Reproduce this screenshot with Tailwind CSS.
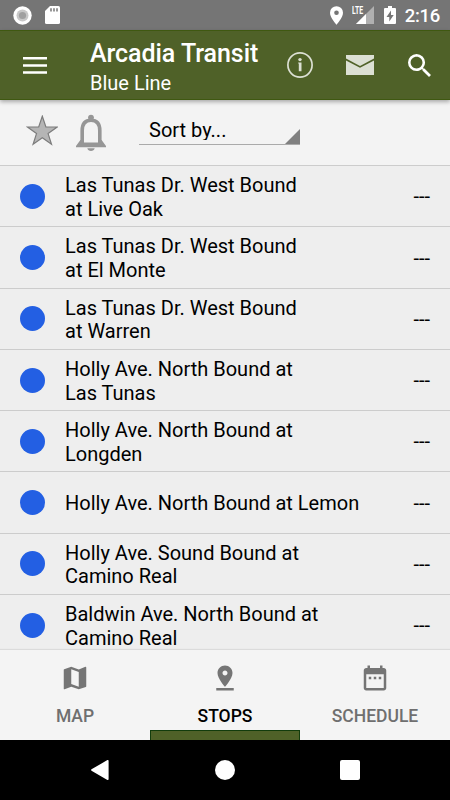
<!DOCTYPE html>
<html lang="en">
<head>
<meta charset="utf-8">
<title>Arcadia Transit</title>
<script src="https://cdn.jsdelivr.net/npm/@tailwindcss/browser@4"></script>
</head>
<body class="w-[450px] h-[800px] overflow-hidden flex flex-col bg-[#eeeeee] font-[Roboto,sans-serif] text-black">

<!-- Status bar -->
<div class="h-[30px] shrink-0 bg-[#757575] flex items-center justify-between pl-[13px] pr-[10px] text-white">
  <div class="flex items-center gap-[13px]">
    <svg class="w-[19px] h-[19px]" viewBox="0 0 19 19"><circle cx="9.5" cy="9.5" r="9.2" fill="#fff"/><circle cx="9.5" cy="9.5" r="6" fill="#c8c8c8"/><circle cx="9.5" cy="9.5" r="3.6" fill="#a0a0a0"/></svg>
    <svg class="w-[15px] h-[18px]" viewBox="0 0 15 18"><path d="M5 0h8.4Q15 0 15 1.6v14.8Q15 18 13.400 18H1.600Q0 18 0 16.400V5z" fill="#fff"/><path d="M6 2.200v3.300M9 2.200v3.300M12 2.200v3.300" stroke="#757575" stroke-width="1.500"/></svg>
  </div>
  <div class="flex items-center">
    <svg class="w-[13px] h-[19px] mr-[8px]" viewBox="0 0 14 20"><path d="M7 0a7 7 0 0 0-7 7c0 5.200 7 13 7 13s7-7.800 7-13a7 7 0 0 0-7-7zm0 9.500a2.500 2.500 0 1 1 0-5 2.500 2.500 0 0 1 0 5z" fill="#fff"/></svg>
    <div class="relative w-[23px] h-[18px] mr-[10px]">
      <svg class="w-[23px] h-[18px]" viewBox="0 0 23 18"><path d="M5 18L23 0v18z" fill="#b0b0b0"/><path d="M5 18L15 8v10z" fill="#fff"/></svg>
      <span class="absolute left-[1px] top-[-1px] text-[11.500px] leading-[10px] font-bold origin-left scale-x-[.6] bg-[#757575]">LTE</span>
    </div>
    <svg class="w-[12px] h-[18px] mr-[9px]" viewBox="0 0 12 18"><path d="M4 0h4v2h3q1 0 1 1v14q0 1-1 1H1q-1 0-1-1V3q0-1 1-1h3z" fill="#fff"/><path d="M7 4.500L2.500 11H5.300v4.500L9.700 9H7z" fill="#757575"/></svg>
    <span class="relative top-[1px] text-[18.500px] leading-[30px] font-medium tracking-[-0.3px]">2:16</span>
  </div>
</div>

<!-- App bar -->
<header class="relative z-10 h-[70px] shrink-0 bg-[#4f6128] border-y border-[#3f5811] shadow-[0_2px_4px_rgba(0,0,0,0.3)] flex items-center pl-[23px] pr-[19px] text-white">
  <svg class="w-[24px] h-[17px]" viewBox="0 0 24 17"><path d="M0 1.300h24M0 8.500h24M0 15.500h24" stroke="#fff" stroke-width="2.500"/></svg>
  <div class="ml-[43px] grow pt-[5px]">
    <h1 class="text-[25px] leading-[30px] font-medium whitespace-nowrap tracking-[-0.05px]">Arcadia Transit</h1>
    <p class="text-[20px] leading-[28px]">Blue Line</p>
  </div>
  <svg class="w-[26px] h-[26px]" viewBox="0 0 26 26"><circle cx="13" cy="13" r="12.100" fill="none" stroke="#dce0d4" stroke-width="1.700"/><circle cx="13" cy="7.600" r="1.700" fill="#dce0d4"/><path d="M11.200 10.600h3.300v8.700h-2.700v-7.700h-.6z" fill="#dce0d4"/></svg>
  <svg class="w-[28px] h-[20px] ml-[33px]" viewBox="0 0 28 20"><path d="M0 0h28v3.600L14 11 0 3.600z" fill="#dce0d4"/><path d="M0 5.400l14 7.400 14-7.400V20H0z" fill="#dce0d4"/></svg>
  <svg class="w-[23px] h-[23px] ml-[34px]" viewBox="3 3 17.500 17.500"><path d="M15.500 14h-.79l-.28-.27A6.471 6.471 0 0 0 16 9.500 6.500 6.500 0 1 0 9.500 16c1.610 0 3.090-.59 4.230-1.570l.27.28v.79l5 4.990L20.490 19l-4.990-5zm-6 0C7.010 14 5 11.990 5 9.500S7.010 5 9.500 5 14 7.010 14 9.500 11.990 14 9.500 14z" fill="#fff"/></svg>
</header>

<!-- Filter bar -->
<div class="h-[65px] shrink-0 bg-[#f3f3f3] flex items-start pl-[26px]">
  <svg class="w-[32px] h-[31px] mt-[15px]" viewBox="0 0 32 31"><path d="M16.300 1.200L19.900 12H31.200L22.100 18.600 25.500 29.300 16.300 22.700 7.100 29.300 10.500 18.600 1.400 12H12.700z" fill="#b5b5b5" stroke="#7c7c7c" stroke-width="1.200"/></svg>
  <svg class="w-[30px] h-[37px] mt-[14px] ml-[18px]" viewBox="0 0 30 37"><circle cx="15" cy="3.600" r="2.900" fill="#969696"/><path d="M6.200 30V16.500C6.200 9.500 9.700 6.200 15 6.200s8.800 3.300 8.800 10.300V30" fill="none" stroke="#969696" stroke-width="3.600"/><path d="M4.400 26h3.600v2.500h14V26h3.600l4.400 6v1.300H0V32z" fill="#969696"/><path d="M11.300 34.300h7.400c-.5 1.800-1.800 2.700-3.700 2.700s-3.200-.9-3.700-2.700z" fill="#969696"/></svg>
  <div class="ml-[33px] mt-[16px] w-[161px] h-[29px] border-b border-[#aaaaaa] relative">
    <span class="block h-[24px] overflow-hidden pl-[10px] text-[20px] leading-[29px]">Sort by...</span>
    <svg class="absolute right-0 bottom-0 w-[15px] h-[15px]" viewBox="0 0 15 15"><path d="M15 0v15H0z" fill="#808080"/></svg>
  </div>
</div>

<!-- Stops -->
<main class="h-[485px] shrink-0 overflow-hidden text-[20px] leading-[23.700px]">
  <div class="h-[61.300px] border-t border-[#cccccc] flex items-center pl-[20px] pr-[20px]"><i class="w-[25px] h-[25px] rounded-full bg-[#235fe3]"></i><p class="ml-[20px] pt-[3px] grow whitespace-nowrap">Las Tunas Dr. West Bound<br>at Live Oak</p><span class="pt-[2px]">---</span></div>
  <div class="h-[61.300px] border-t border-[#cccccc] flex items-center pl-[20px] pr-[20px]"><i class="w-[25px] h-[25px] rounded-full bg-[#235fe3]"></i><p class="ml-[20px] pt-[3px] grow whitespace-nowrap">Las Tunas Dr. West Bound<br>at El Monte</p><span class="pt-[2px]">---</span></div>
  <div class="h-[61.300px] border-t border-[#cccccc] flex items-center pl-[20px] pr-[20px]"><i class="w-[25px] h-[25px] rounded-full bg-[#235fe3]"></i><p class="ml-[20px] pt-[3px] grow whitespace-nowrap">Las Tunas Dr. West Bound<br>at Warren</p><span class="pt-[2px]">---</span></div>
  <div class="h-[61.300px] border-t border-[#cccccc] flex items-center pl-[20px] pr-[20px]"><i class="w-[25px] h-[25px] rounded-full bg-[#235fe3]"></i><p class="ml-[20px] pt-[3px] grow whitespace-nowrap">Holly Ave. North Bound at<br>Las Tunas</p><span class="pt-[2px]">---</span></div>
  <div class="h-[61.300px] border-t border-[#cccccc] flex items-center pl-[20px] pr-[20px]"><i class="w-[25px] h-[25px] rounded-full bg-[#235fe3]"></i><p class="ml-[20px] pt-[3px] grow whitespace-nowrap">Holly Ave. North Bound at<br>Longden</p><span class="pt-[2px]">---</span></div>
  <div class="h-[61.300px] border-t border-[#cccccc] flex items-center pl-[20px] pr-[20px]"><i class="w-[25px] h-[25px] rounded-full bg-[#235fe3]"></i><p class="ml-[20px] pt-[2px] grow whitespace-nowrap">Holly Ave. North Bound at Lemon</p><span class="pt-[2px]">---</span></div>
  <div class="h-[61.300px] border-t border-[#cccccc] flex items-center pl-[20px] pr-[20px]"><i class="w-[25px] h-[25px] rounded-full bg-[#235fe3]"></i><p class="ml-[20px] pt-[3px] grow whitespace-nowrap">Holly Ave. Sound Bound at<br>Camino Real</p><span class="pt-[2px]">---</span></div>
  <div class="h-[61.300px] border-t border-[#cccccc] flex items-center pl-[20px] pr-[20px]"><i class="w-[25px] h-[25px] rounded-full bg-[#235fe3]"></i><p class="ml-[20px] pt-[3px] grow whitespace-nowrap">Baldwin Ave. North Bound at<br>Camino Real</p><span class="pt-[2px]">---</span></div>
</main>

<!-- Tabs -->
<nav class="relative h-[90px] shrink-0 bg-[#f4f4f4] shadow-[0_-1px_1px_rgba(0,0,0,0.08)] grid grid-cols-3 text-[17.500px] leading-[20px] font-medium text-[#6f6f6f]">
  <div class="flex flex-col items-center pt-[13px]">
    <svg class="w-[30px] h-[30px]" viewBox="0 0 24 24"><path d="M20.500 3l-.16.03L15 5.100 9 3 3.360 4.900c-.21.070-.36.250-.36.480V20.500c0 .28.220.5.5.5l.16-.03L9 18.900l6 2.100 5.640-1.900c.21-.070.36-.25.36-.48V3.500c0-.28-.22-.5-.5-.5zM15 19l-6-2.110V5l6 2.110V19z" fill="#757575"/></svg>
    <span class="mt-[13px]">MAP</span>
  </div>
  <div class="flex flex-col items-center pt-[13px]">
    <svg class="w-[30px] h-[30px]" viewBox="0 0 24 24"><path d="M18 8c0-3.310-2.690-6-6-6S6 4.690 6 8c0 4.500 6 11 6 11s6-6.500 6-11zm-8 0c0-1.100.9-2 2-2s2 .9 2 2-.89 2-2 2c-1.100 0-2-.9-2-2zM5 20v2h14v-2H5z" fill="#757575"/></svg>
    <span class="mt-[13px] text-black">STOPS</span>
    <div class="mt-auto h-[10px] w-full bg-[#4f6128] border border-b-0 border-[#123c0c]"></div>
  </div>
  <div class="flex flex-col items-center pt-[13px]">
    <svg class="w-[30px] h-[30px]" viewBox="0 0 24 24"><path d="M9 11H7v2h2v-2zm4 0h-2v2h2v-2zm4 0h-2v2h2v-2zm2-7h-1V2h-2v2H8V2H6v2H5c-1.110 0-1.990.9-1.990 2L3 20c0 1.100.89 2 2 2h14c1.100 0 2-.9 2-2V6c0-1.100-.9-2-2-2zm0 16H5V9h14v11z" fill="#757575"/></svg>
    <span class="mt-[13px]">SCHEDULE</span>
  </div>
</nav>

<!-- System navigation -->
<div class="h-[60px] shrink-0 bg-black flex items-center pl-[91px]">
  <svg class="w-[18px] h-[20px]" viewBox="0 0 18 20"><path d="M16.800.8v18.400L.9 10z" fill="#fff" stroke="#fff" stroke-width="1.600" stroke-linejoin="round"/></svg>
  <div class="ml-[106px] w-[20px] h-[20px] rounded-full bg-white"></div>
  <div class="ml-[105px] w-[20px] h-[20px] rounded-[2px] bg-white"></div>
</div>
</body>
</html>
